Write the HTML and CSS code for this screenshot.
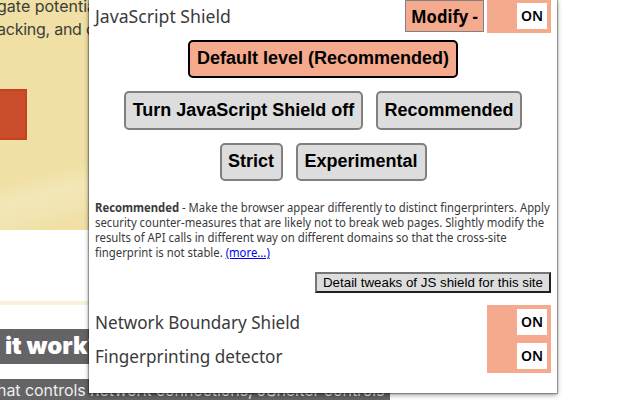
FILE: index.html
```html
<!DOCTYPE html>
<html lang="en">
<head>
<meta charset="utf-8">
<title>JShelter</title>
<link rel="stylesheet" href="styles.css">
</head>
<body>
<div class="page">
  <section class="hero">
    <p class="intro"><span>gate potential</span><br><span class="i2">acking, and c</span></p>
    <div class="cta"></div>
  </section>
  <div class="rule"></div>
  <h2 class="heading">it work?</h2>
  <p class="lead">hat controls network connections, JShelter controls</p>
</div>
<main class="popup">
  <div class="row first">
    <span class="label l1">JavaScript Shield</span>
    <button class="modify"><span>Modify -</span></button>
    <div class="toggle"><span>ON</span></div>
  </div>
  <div class="levels">
    <div class="level-row"><button class="level active w270">Default level (Recommended)</button></div>
    <div class="level-row tall"><button class="level w239">Turn JavaScript Shield off</button><button class="level w146">Recommended</button></div>
    <div class="level-row"><button class="level w63">Strict</button><button class="level w131">Experimental</button></div>
  </div>
  <p class="description">
    <span class="d1"><b>Recommended</b> - Make the browser appear differently to distinct fingerprinters. Apply</span>
    <span class="d2">security counter-measures that are likely not to break web pages. Slightly modify the</span>
    <span class="d3">results of API calls in different way on different domains so that the cross-site</span>
    <span class="d4">fingerprint is not stable. <a href="#">(more...)</a></span>
  </p>
  <button class="tweaks">Detail tweaks of JS shield for this site</button>
  <div class="row"><span class="label l2">Network Boundary Shield</span><div class="toggle"><span>ON</span></div></div>
  <div class="row"><span class="label l3">Fingerprinting detector</span><div class="toggle"><span>ON</span></div></div>
</main>
</body>
</html>
```
FILE: styles.css
```css
* { box-sizing: border-box; }
body { margin: 0; width: 640px; height: 400px; overflow: hidden; background: #fff; }
p, h2 { margin: 0; }
button { margin: 0; padding: 0; color: #000; white-space: nowrap; }
.page { height: 400px; overflow: hidden; font-family: Inter, sans-serif; white-space: nowrap; }
.hero { width: 100px; height: 230px; overflow: hidden; background: linear-gradient(165deg, transparent 72%, #f2e7b7 80%, #f1e4b0 88%, transparent 94%), #f0e0a5; }
.intro { margin-top: -5px; margin-left: -3px; font-size: 16px; line-height: 23px; color: #3d3d3b; }
.i2 { letter-spacing: -.25px; }
.cta { width: 27px; height: 51px; margin-top: 48px; background: #c94d2a; border: 2px solid #c5431f; border-left: 0; }
.rule { width: 100px; height: 4px; margin-top: 71px; background: #f8f2d8; }
.heading { width: 100px; height: 35px; margin-top: 24px; padding-left: 5px; overflow: hidden; background: #646466; color: #fff; font-size: 24px; line-height: 34px; font-weight: 900; letter-spacing: 0; }
.lead { width: 390px; height: 24px; margin-top: 15px; text-indent: -3px; overflow: hidden; background: #646466; color: #eee; font-size: 16px; line-height: 22px; letter-spacing: -.05px; }
.popup { position: absolute; left: 89px; top: -1px; width: 468px; height: 394px; padding: 0 6px; background: #fff; box-shadow: 0 0 1px 1px rgba(0,0,0,.3), 0 2px 5px rgba(0,0,0,.4); font-family: "Noto Sans", sans-serif; color: #3a3a3c; }
.row { display: flex; height: 34px; align-items: center; }
.label { margin-right: auto; padding-bottom: 1px; font-size: 18px; line-height: 34px; white-space: nowrap; transform: scaleX(.95); transform-origin: left; }
.l1 { transform: scaleX(.98); }
.modify { width: 79px; height: 32px; margin-right: 3px; border: 1px solid #808080; background: #f5aa8d; font: 700 18px/30px "Noto Sans", sans-serif; }
.modify span { display: block; width: max-content; margin-left: 5px; transform: scaleX(.92); transform-origin: left; }
.toggle { display: flex; width: 64px; height: 34px; padding: 4px; justify-content: flex-end; background: #f5aa8d; }
.toggle span { width: 30px; height: 26px; background: #fff; color: #000; text-align: center; font: 600 14px/26px "Noto Sans", sans-serif; }
.levels { padding-top: 7px; }
.level-row { display: flex; justify-content: center; gap: 13px; height: 38px; margin-bottom: 13px; }
.level-row.tall { height: 39px; }
.level { padding-bottom: 2px; border: 2px solid #808080; border-radius: 5px; background: #ddd; font: 700 18px/32px "Liberation Sans", sans-serif; }
.level.active { border-color: #000; background: #f5aa8d; }
.w270 { width: 270px; }
.w239 { width: 239px; }
.w146 { width: 146px; }
.w63 { width: 63px; }
.w131 { width: 131px; }
.description { margin-top: 19px; font-size: 12px; line-height: 15px; }
.description span { display: block; width: max-content; white-space: nowrap; transform: scaleX(.943); transform-origin: left; }
.description .d1 { transform: scaleX(.94); }
.description .d3 { transform: scaleX(.948); }
.description a { color: #00e; }
.tweaks { display: block; width: 236px; height: 21px; margin: 12px 0 12px auto; border: 2px solid; border-color: #767676 #212121 #212121 #767676; background: #ddd; font: 13.333px/17px "Liberation Sans", sans-serif; }
```
